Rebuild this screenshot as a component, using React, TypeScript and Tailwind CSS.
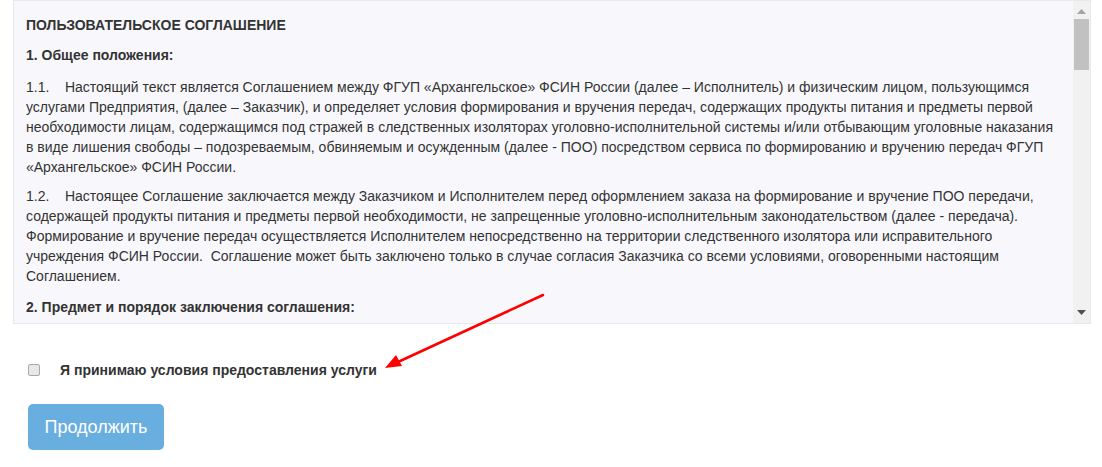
export default function App() {
  return (
    <div
      className="relative h-[467px] w-[1102px] bg-white text-[#333]"
      style={{ fontFamily: '"Liberation Sans", Arial, sans-serif' }}
    >
      <div className="pl-[13px] pr-[11px]">
        <div className="flex h-[324px] border border-[#e8e8ec] bg-[#f8f8fc]">
          <div className="flex-1 overflow-hidden pl-[12px] pr-[11px] pt-[14px] text-[14px] leading-[20px]">
            <p className="mb-[10px] font-bold">ПОЛЬЗОВАТЕЛЬСКОЕ СОГЛАШЕНИЕ</p>
            <p className="mb-[12px] font-bold">1. Общее положения:</p>
            <p className="mb-[9px]">
              1.1.&nbsp;&nbsp;&nbsp; Настоящий текст является Соглашением между ФГУП «Архангельское» ФСИН России
              (далее – Исполнитель) и физическим лицом, пользующимся услугами Предприятия, (далее – Заказчик), и
              определяет условия формирования и вручения передач, содержащих продукты питания и предметы первой
              необходимости лицам, содержащимся под стражей в следственных изоляторах уголовно-исполнительной системы
              и/или отбывающим уголовные наказания в виде лишения свободы – подозреваемым, обвиняемым и осужденным
              (далее - ПОО) посредством сервиса по формированию и вручению передач ФГУП «Архангельское» ФСИН России.
            </p>
            <p className="mb-[11px]">
              1.2.&nbsp;&nbsp;&nbsp; Настоящее Соглашение заключается между Заказчиком и Исполнителем перед
              оформлением заказа на формирование и вручение ПОО передачи, содержащей продукты питания и предметы первой
              необходимости, не запрещенные уголовно-исполнительным законодательством (далее - передача). Формирование
              и вручение передач осуществляется Исполнителем непосредственно на территории следственного изолятора или
              исправительного учреждения ФСИН России.&nbsp; Соглашение может быть заключено только в случае согласия
              Заказчика со всеми условиями, оговоренными настоящим Соглашением.
            </p>
            <p className="font-bold">2. Предмет и порядок заключения соглашения:</p>
          </div>
          <div className="flex w-[17px] flex-col items-center bg-[#f1f1f1]">
            <svg width="9" height="5" viewBox="0 0 9 5" className="mt-[8px]">
              <polygon points="4.5,0 9,5 0,5" fill="#a3a3a3" />
            </svg>
            <div className="mt-[5px] h-[51px] w-[15px] bg-[#c1c1c1]" />
            <div className="flex-1" />
            <svg width="9" height="5" viewBox="0 0 9 5" className="mb-[8px]">
              <polygon points="0,0 9,0 4.5,5" fill="#505050" />
            </svg>
          </div>
        </div>
      </div>

      <label className="ml-[28px] mt-[36px] flex items-center gap-[20px] text-[14px] font-bold leading-[20px]">
        <input
          type="checkbox"
          className="m-0 h-[12px] w-[12px] appearance-none rounded-[2px] border border-[#a9a9a9] bg-[#e8e8e8]"
        />
        <span>Я принимаю условия предоставления услуги</span>
      </label>

      <button className="ml-[28px] mt-[24px] h-[46px] w-[136px] cursor-not-allowed rounded-[5px] bg-[#68aede] text-[18px] text-white">
        Продолжить
      </button>

      <svg className="pointer-events-none absolute left-0 top-0" width="1102" height="467">
        <line x1="543" y1="295" x2="398" y2="362" stroke="#f00" strokeWidth="2.5" strokeLinecap="round" />
        <polygon points="385,368 396,355 402,366" fill="#f00" />
      </svg>
    </div>
  )
}
